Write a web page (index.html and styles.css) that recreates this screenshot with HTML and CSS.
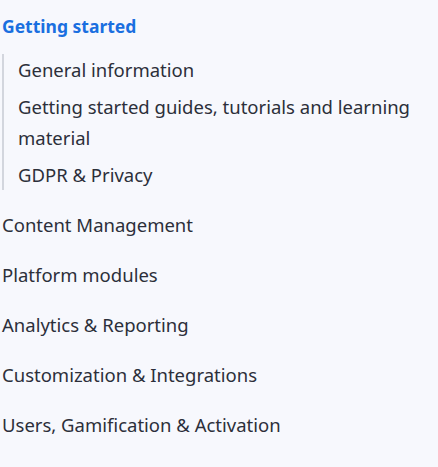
FILE: index.html
```html
<!DOCTYPE html>
<html lang="en">
<head>
    <meta charset="UTF-8">
    <title>Knowledge base</title>
    <link rel="stylesheet" href="styles.css">
</head>
<body>
    <nav class="kb-nav">
        <div class="kb-group">
            <a href="#" class="kb-title active">Getting started</a>
            <ul class="kb-sub">
                <li><a href="#">General information</a></li>
                <li><a href="#">Getting started guides, tutorials and learning material</a></li>
                <li><a href="#">GDPR &amp; Privacy</a></li>
            </ul>
        </div>
        <a href="#" class="kb-title">Content Management</a>
        <a href="#" class="kb-title">Platform modules</a>
        <a href="#" class="kb-title">Analytics &amp; Reporting</a>
        <a href="#" class="kb-title">Customization &amp; Integrations</a>
        <a href="#" class="kb-title">Users, Gamification &amp; Activation</a>
    </nav>
</body>
</html>
```

FILE: styles.css
```css
body {
    margin: 0;
    background: #f7f8fd;
    font-family: "Noto Sans", Arial, sans-serif;
    color: #2c2f3a;
}
a {
    color: inherit;
    text-decoration: none;
}
.kb-nav {
    display: flex;
    flex-direction: column;
    gap: 19px;
    padding: 11px 2px;
    max-width: 430px;
}
.kb-title {
    display: block;
    font-size: 18.5px;
    line-height: 31px;
}
.kb-title.active {
    color: #1a6fe0;
    font-weight: 700;
    font-size: 17.5px;
}
.kb-sub {
    list-style: none;
    margin: 12px 0 0 0;
    padding: 0 0 0 14px;
    border-left: 2px solid #d3d6de;
    display: flex;
    flex-direction: column;
    gap: 6px;
}
.kb-sub li a {
    display: block;
    font-size: 18.5px;
    line-height: 31px;
}
```
